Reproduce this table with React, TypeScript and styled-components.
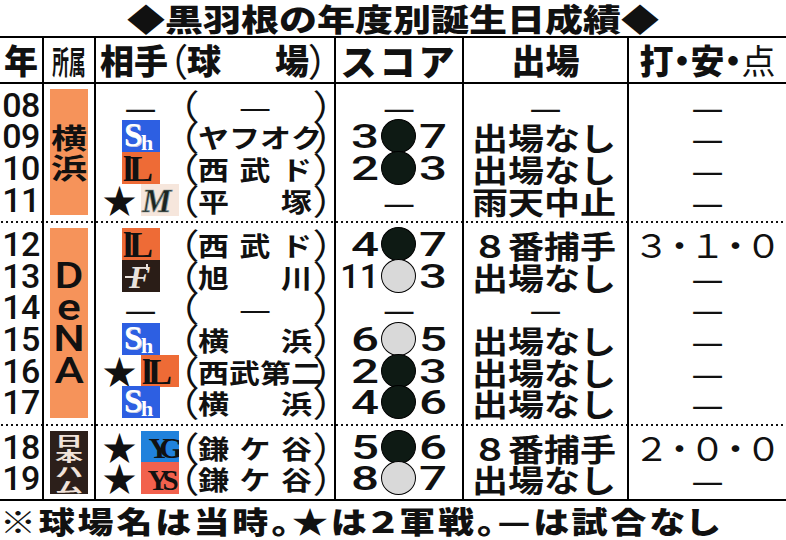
import React from "react";
import styled, { createGlobalStyle } from "styled-components";

const GlobalStyle = createGlobalStyle`
  html, body { margin: 0; padding: 0; background: #fff; }
  #root { width: 786px; height: 540px; }
`;

const JP = `"Noto Sans CJK JP", "Noto Sans", sans-serif`;
const NUM = `Roboto, "Liberation Sans", Arial, sans-serif`;
const SERIF = `"Liberation Serif", "DejaVu Serif", serif`;
const COLS = "44px 52px 240px 128px 165px 157px";
const ROW_H = 31.6;

const Page = styled.div`
  width: 786px;
  height: 540px;
  overflow: hidden;
  background: #fff;
  color: #111;
  font-family: ${JP};
`;

const Title = styled.h1`
  margin: 0;
  height: 36px;
  display: flex;
  align-items: center;
  justify-content: center;
  font-size: 38px;
  font-weight: 900;
  line-height: 1;
`;

const TitleText = styled.span`
  display: inline-block;
  transform: scaleY(0.82);
`;

const Table = styled.div`
  display: flex;
  flex-direction: column;
`;

const HeaderRow = styled.div`
  display: grid;
  grid-template-columns: ${COLS};
  height: 48px;
  box-sizing: border-box;
  border-top: 2px solid #000;
  border-bottom: 2px solid #000;
`;

const HCell = styled.div<{ $last?: boolean; $start?: boolean }>`
  display: flex;
  align-items: center;
  justify-content: ${(p) => (p.$start ? "flex-start" : "center")};
  border-right: ${(p) => (p.$last ? "none" : "2px solid #000")};
  font-size: 34px;
  font-weight: 900;
  line-height: 1;
  white-space: nowrap;
  padding-left: ${(p) => (p.$start ? "4px" : "0")};
`;

const Narrow = styled.span`
  display: inline-block;
  font-size: 32px;
  font-weight: 700;
  transform: scaleX(0.52);
`;

const Wide = styled.span`
  letter-spacing: 3px;
  font-size: 36px;
`;

const Light = styled.span`
  font-weight: 400;
`;

const Palt = styled.span`
  font-feature-settings: "palt" 1;
`;

const HParen = styled.span`
  font-weight: 400;
  font-size: 38px;
  font-feature-settings: "palt" 1;
`;

const HZone = styled.span`
  width: 122px;
  display: flex;
  justify-content: space-between;
`;

const Group = styled.div<{ $end?: boolean }>`
  display: grid;
  grid-template-columns: ${COLS};
  ${(p) =>
    p.$end
      ? `border-bottom: 2px solid #000;`
      : `background-image: linear-gradient(to right, #111 0 2px, transparent 2px 5px);
         background-size: 5px 2px;
         background-repeat: repeat-x;
         background-position: 1px 100%;`}
  & > * {
    padding-top: 5px;
    padding-bottom: ${(p) => (p.$end ? 5 : 8)}px;
  }
`;

const Cell = styled.div<{ $last?: boolean }>`
  display: flex;
  flex-direction: column;
  border-right: ${(p) => (p.$last ? "none" : "2px solid #000")};
  min-width: 0;
`;

const Line = styled.div<{ $justify?: string; $pad?: number }>`
  height: ${ROW_H}px;
  display: flex;
  align-items: center;
  justify-content: ${(p) => p.$justify ?? "center"};
  padding-left: ${(p) => p.$pad ?? 0}px;
  white-space: nowrap;
  line-height: 1;
`;

const Year = styled.span`
  font-family: ${NUM};
  font-size: 34px;
  font-weight: 500;
  letter-spacing: -0.5px;
`;

const TeamCell = styled(Cell)`
  align-items: center;
`;

const Badge = styled.div<{ $bg: string; $fg: string }>`
  width: 38px;
  flex: 1;
  background: ${(p) => p.$bg};
  color: ${(p) => p.$fg};
  display: flex;
  flex-direction: column;
  justify-content: center;
  align-items: center;
`;

const BadgeKanji = styled.span`
  height: 30px;
  display: flex;
  align-items: center;
  font-size: 36px;
  font-weight: 700;
  line-height: 1;
  transform: scaleY(0.78);
`;

const BadgeLatin = styled.span`
  height: ${ROW_H}px;
  display: flex;
  align-items: center;
  font-family: ${NUM};
  font-size: 37px;
  font-weight: 500;
  line-height: 1;
  transform: scaleX(1.2);
`;

const BadgeSmall = styled.span`
  height: 15.5px;
  display: flex;
  align-items: center;
  font-size: 28px;
  font-weight: 700;
  line-height: 1;
  transform: scaleY(0.5);
`;

const LogoSlot = styled.div`
  width: 89px;
  flex-shrink: 0;
  display: flex;
  align-items: center;
  justify-content: center;
  gap: 4px;
`;

const Star = styled.span`
  font-size: 34px;
  line-height: 1;
`;

const Dash = styled.span<{ $size?: number }>`
  font-size: ${(p) => p.$size ?? 36}px;
  font-weight: 400;
  line-height: 1;
`;

const Venue = styled.div`
  display: flex;
  align-items: center;
  margin-left: -7px;
  font-size: 31px;
  font-weight: 700;
  line-height: 1;
  transform: scaleY(0.86);
`;

const Paren = styled.span<{ $close?: boolean }>`
  font-weight: 400;
  font-size: 40px;
  font-feature-settings: "palt" 1;
  margin-left: ${(p) => (p.$close ? "2px" : "0")};
`;

const Zone = styled.span<{ $center?: boolean }>`
  width: 114px;
  display: flex;
  justify-content: ${(p) => (p.$center ? "center" : "space-between")};
`;

const ScoreNum = styled.span<{ $side: "l" | "r"; $wide: boolean }>`
  display: inline-block;
  width: ${(p) => (p.$side === "l" ? "43px" : "40px")};
  text-align: ${(p) => (p.$side === "l" ? "right" : "left")};
  font-family: ${NUM};
  font-size: 34px;
  font-weight: 500;
  transform: scaleX(${(p) => (p.$wide ? 1.45 : 1)});
  transform-origin: ${(p) => (p.$side === "l" ? "right" : "left")} center;
`;

const Mark = styled.span<{ $win: boolean }>`
  flex-shrink: 0;
  width: 35px;
  height: 34px;
  box-sizing: border-box;
  margin: 0 3px 0 2px;
  border-radius: 50%;
  background: ${(p) => (p.$win ? "#0e1a14" : "#d9d9d9")};
  border: 1.5px solid #000;
`;

const PlayText = styled.span`
  display: inline-block;
  font-size: 36px;
  font-weight: 700;
  transform: scaleY(0.85);
`;

const StatText = styled.span`
  display: flex;
  align-items: center;
  font-size: 36px;
  font-weight: 400;
  transform: scaleY(0.9);
`;

const StatDot = styled.span`
  width: 20px;
  text-align: center;
  font-feature-settings: "palt" 1;
`;

const Note = styled.p`
  margin: 0;
  height: 38px;
  display: flex;
  align-items: center;
  font-size: 36px;
  font-weight: 900;
  line-height: 1;
  white-space: nowrap;
`;

const NoteText = styled.span`
  display: inline-block;
  transform: scaleY(0.82);
  transform-origin: left center;
  font-feature-settings: "palt" 1;
  letter-spacing: 2.8px;
`;

/* ---------- logos ---------- */
const LogoSvg = styled.svg`
  display: block;
  flex-shrink: 0;
`;

type LogoKind = "sh" | "l" | "m" | "f" | "g" | "s";

const Logo: React.FC<{ kind: LogoKind }> = ({ kind }) => {
  const common = { width: 38, height: 32, viewBox: "0 0 38 32" };
  switch (kind) {
    case "sh":
      return (
        <LogoSvg {...common}>
          <rect width="38" height="32" fill="#2d5fe2" />
          <text x="3" y="27" fontFamily={SERIF} fontWeight="700" fontSize="33" fill="#c4cde4">S</text>
          <text x="2" y="26" fontFamily={SERIF} fontWeight="700" fontSize="33" fill="#fff">S</text>
          <text x="19" y="30" fontFamily={SERIF} fontWeight="700" fontSize="22" fill="#fff">h</text>
        </LogoSvg>
      );
    case "l":
      return (
        <LogoSvg {...common}>
          <rect width="38" height="32" fill="#ee6b36" />
          <text x="1" y="29" fontFamily={SERIF} fontWeight="700" fontSize="36" fill="#111">l</text>
          <text x="7" y="29" fontFamily={SERIF} fontWeight="700" fontSize="36" fill="#111">L</text>
        </LogoSvg>
      );
    case "m":
      return (
        <LogoSvg {...common}>
          <rect width="38" height="32" fill="#f6e6dc" />
          <text x="1" y="28" fontFamily={SERIF} fontWeight="700" fontStyle="italic" fontSize="33" fill="#1c2420" stroke="#8a9a98" strokeWidth="0.7">M</text>
        </LogoSvg>
      );
    case "f":
      return (
        <LogoSvg {...common}>
          <rect width="38" height="32" fill="#2a1d17" />
          <text x="7" y="28" fontFamily={SERIF} fontWeight="700" fontStyle="italic" fontSize="32" fill="#e9e2dc">F</text>
          <rect x="3" y="16" width="12" height="2" fill="#e9e2dc" />
          <rect x="24" y="4" width="2" height="6" fill="#e9e2dc" />
        </LogoSvg>
      );
    case "g":
      return (
        <LogoSvg {...common}>
          <rect width="38" height="32" fill="#2182dc" />
          <text x="19" y="27" textAnchor="middle" fontFamily={SERIF} fontWeight="700" fontSize="30" fill="#111" letterSpacing="-11">YG</text>
        </LogoSvg>
      );
    case "s":
      return (
        <LogoSvg {...common}>
          <rect width="38" height="32" fill="#f2614d" />
          <text x="19" y="28" textAnchor="middle" fontFamily={SERIF} fontWeight="700" fontSize="29" fill="#111" letterSpacing="-6">YS</text>
        </LogoSvg>
      );
  }
};

/* ---------- data ---------- */
type Row = {
  year: string;
  star?: boolean;
  logo?: LogoKind;
  venue?: string[];
  score?: [string, boolean, string];
  play: string;
  stat: string;
};

type TeamKind = { bg: string; fg: string; kind: "kanji" | "latin" | "small"; chars: string[] };

const groups: { team: TeamKind; rows: Row[]; end?: boolean }[] = [
  {
    team: { bg: "#f6935a", fg: "#111", kind: "kanji", chars: ["横", "浜"] },
    rows: [
      { year: "08", play: "—", stat: "—" },
      { year: "09", logo: "sh", venue: ["ヤ", "フ", "オ", "ク"], score: ["3", true, "7"], play: "出場なし", stat: "—" },
      { year: "10", logo: "l", venue: ["西", "武", "ド"], score: ["2", true, "3"], play: "出場なし", stat: "—" },
      { year: "11", star: true, logo: "m", venue: ["平", "塚"], play: "雨天中止", stat: "—" },
    ],
  },
  {
    team: { bg: "#f6935a", fg: "#111", kind: "latin", chars: ["D", "e", "N", "A"] },
    rows: [
      { year: "12", logo: "l", venue: ["西", "武", "ド"], score: ["4", true, "7"], play: "８番捕手", stat: "３・１・０" },
      { year: "13", logo: "f", venue: ["旭", "川"], score: ["11", false, "3"], play: "出場なし", stat: "—" },
      { year: "14", play: "—", stat: "—" },
      { year: "15", logo: "sh", venue: ["横", "浜"], score: ["6", false, "5"], play: "出場なし", stat: "—" },
      { year: "16", star: true, logo: "l", venue: ["西", "武", "第", "二"], score: ["2", true, "3"], play: "出場なし", stat: "—" },
      { year: "17", logo: "sh", venue: ["横", "浜"], score: ["4", true, "6"], play: "出場なし", stat: "—" },
    ],
  },
  {
    end: true,
    team: { bg: "#2c1f1a", fg: "#f1e3da", kind: "small", chars: ["日", "本", "ハ", "ム"] },
    rows: [
      { year: "18", star: true, logo: "g", venue: ["鎌", "ケ", "谷"], score: ["5", true, "6"], play: "８番捕手", stat: "２・０・０" },
      { year: "19", star: true, logo: "s", venue: ["鎌", "ケ", "谷"], score: ["8", false, "7"], play: "出場なし", stat: "—" },
    ],
  },
];

const TeamBadge: React.FC<{ team: TeamKind }> = ({ team }) => (
  <Badge $bg={team.bg} $fg={team.fg}>
    {team.chars.map((c, i) =>
      team.kind === "kanji" ? (
        <BadgeKanji key={i}>{c}</BadgeKanji>
      ) : team.kind === "latin" ? (
        <BadgeLatin key={i}>{c}</BadgeLatin>
      ) : (
        <BadgeSmall key={i}>{c}</BadgeSmall>
      )
    )}
  </Badge>
);

const OppLine: React.FC<{ row: Row }> = ({ row }) => (
  <Line $justify="flex-start">
    <LogoSlot>
      {row.star && <Star>★</Star>}
      {row.logo ? <Logo kind={row.logo} /> : <Dash>—</Dash>}
    </LogoSlot>
    <Venue>
      <Paren>（</Paren>
      {row.venue ? (
        <Zone>
          {row.venue.map((c, i) => (
            <span key={i}>{c}</span>
          ))}
        </Zone>
      ) : (
        <Zone $center>
          <Dash>—</Dash>
        </Zone>
      )}
      <Paren $close>）</Paren>
    </Venue>
  </Line>
);

const ScoreLine: React.FC<{ row: Row }> = ({ row }) =>
  row.score ? (
    <Line $justify="flex-start">
      <ScoreNum $side="l" $wide={row.score[0].length === 1}>{row.score[0]}</ScoreNum>
      <Mark $win={row.score[1]} />
      <ScoreNum $side="r" $wide={row.score[2].length === 1}>{row.score[2]}</ScoreNum>
    </Line>
  ) : (
    <Line>
      <Dash>—</Dash>
    </Line>
  );

const StatLine: React.FC<{ value: string }> = ({ value }) => (
  <Line>
    {value === "—" ? (
      <Dash>—</Dash>
    ) : (
      <StatText>
        {value.split("").map((c, i) => (c === "・" ? <StatDot key={i}>{c}</StatDot> : <span key={i}>{c}</span>))}
      </StatText>
    )}
  </Line>
);

export default function App() {
  return (
    <Page>
      <GlobalStyle />
      <Title>
        <TitleText>◆黒羽根の年度別誕生日成績◆</TitleText>
      </Title>
      <Table>
        <HeaderRow>
          <HCell>年</HCell>
          <HCell>
            <Narrow>所属</Narrow>
          </HCell>
          <HCell $start>
            <span>相手</span>
            <HParen>（</HParen>
            <HZone>
              <span>球</span>
              <span>場</span>
            </HZone>
            <HParen>）</HParen>
          </HCell>
          <HCell>
            <Wide>スコア</Wide>
          </HCell>
          <HCell>出場</HCell>
          <HCell $last>
            <Palt>
              打・安・<Light>点</Light>
            </Palt>
          </HCell>
        </HeaderRow>
        {groups.map((g, gi) => (
          <Group key={gi} $end={g.end}>
            <Cell>
              {g.rows.map((r) => (
                <Line key={r.year}>
                  <Year>{r.year}</Year>
                </Line>
              ))}
            </Cell>
            <TeamCell>
              <TeamBadge team={g.team} />
            </TeamCell>
            <Cell>
              {g.rows.map((r) => (
                <OppLine key={r.year} row={r} />
              ))}
            </Cell>
            <Cell>
              {g.rows.map((r) => (
                <ScoreLine key={r.year} row={r} />
              ))}
            </Cell>
            <Cell>
              {g.rows.map((r) =>
                r.play === "—" ? (
                  <Line key={r.year}>
                    <Dash>—</Dash>
                  </Line>
                ) : (
                  <Line key={r.year} $justify="flex-start" $pad={8}>
                    <PlayText>{r.play}</PlayText>
                  </Line>
                )
              )}
            </Cell>
            <Cell $last>
              {g.rows.map((r) => (
                <StatLine key={r.year} value={r.stat} />
              ))}
            </Cell>
          </Group>
        ))}
      </Table>
      <Note>
        <NoteText>※球場名は当時。★は２軍戦。—は試合なし</NoteText>
      </Note>
    </Page>
  );
}
